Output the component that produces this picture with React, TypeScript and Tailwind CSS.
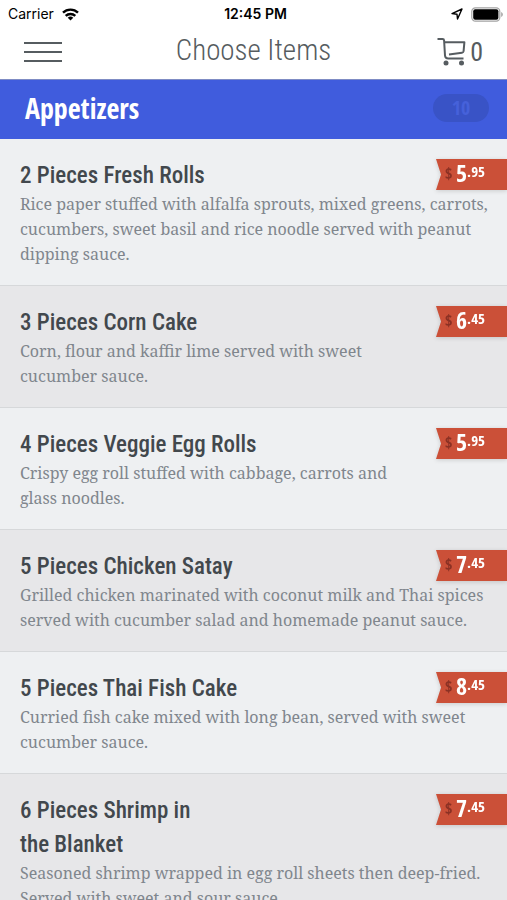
import { useState } from 'react';

type MenuItem = {
    id: number;
    name: string;
    description: string;
    dollars: number;
    cents: string;
};

const MENU_ITEMS: MenuItem[] = [
    {
        id: 1,
        name: '2 Pieces Fresh Rolls',
        description: 'Rice paper stuffed with alfalfa sprouts, mixed greens, carrots,\ncucumbers, sweet basil and rice noodle served with peanut\ndipping sauce.',
        dollars: 5,
        cents: '95',
    },
    {
        id: 2,
        name: '3 Pieces Corn Cake',
        description: 'Corn, flour and kaffir lime served with sweet\ncucumber sauce.',
        dollars: 6,
        cents: '45',
    },
    {
        id: 3,
        name: '4 Pieces Veggie Egg Rolls',
        description: 'Crispy egg roll stuffed with cabbage, carrots and\nglass noodles.',
        dollars: 5,
        cents: '95',
    },
    {
        id: 4,
        name: '5 Pieces Chicken Satay',
        description: 'Grilled chicken marinated with coconut milk and Thai spices\nserved with cucumber salad and homemade peanut sauce.',
        dollars: 7,
        cents: '45',
    },
    {
        id: 5,
        name: '5 Pieces Thai Fish Cake',
        description: 'Curried fish cake mixed with long bean, served with sweet\ncucumber sauce.',
        dollars: 8,
        cents: '45',
    },
    {
        id: 6,
        name: '6 Pieces Shrimp in\nthe Blanket',
        description: 'Seasoned shrimp wrapped in egg roll sheets then deep-fried.\nServed with sweet and sour sauce.',
        dollars: 7,
        cents: '45',
    },
];

const StatusBar = () => (
    <div className="grid grid-cols-3 items-center h-7 pl-2 pr-1 font-['Inter',sans-serif] text-sm text-black">
        <div className="flex items-center gap-2">
            <span>Carrier</span>
            <svg width="17" height="13" viewBox="0 0 17 13" aria-hidden="true">
                <g fill="none" stroke="currentColor" strokeWidth="2.4">
                    <path d="M1 4.7a10.7 10.7 0 0 1 15 0" />
                    <path d="M3.7 7.9a6.9 6.9 0 0 1 9.6 0" />
                </g>
                <path d="M8.5 12.6 5.7 9.8a4 4 0 0 1 5.6 0z" fill="currentColor" />
            </svg>
        </div>
        <span className="text-center font-semibold">12:45 PM</span>
        <div className="flex items-center justify-end gap-2">
            <svg width="12" height="12" viewBox="0 0 12 12" aria-hidden="true">
                <path d="M11 1 6.5 11 6 6.2 1 5.6z" fill="none" stroke="currentColor" strokeWidth="1.4" strokeLinejoin="round" />
            </svg>
            <svg width="32" height="15" viewBox="0 0 32 15" aria-hidden="true">
                <rect x="0.8" y="0.8" width="28" height="13.4" rx="3.6" fill="none" stroke="#a3a3a3" strokeWidth="1.2" />
                <rect x="2.2" y="2.2" width="25.2" height="10.6" rx="2" fill="currentColor" />
                <path d="M30.2 5v5c1-.4 1.6-1.4 1.6-2.5s-.6-2.1-1.6-2.5z" fill="#a3a3a3" />
            </svg>
        </div>
    </div>
);

const CartIcon = () => (
    <svg width="29" height="29" viewBox="0 0 29 29" aria-hidden="true">
        <g fill="none" stroke="currentColor" strokeWidth="2" strokeLinejoin="round">
            <path d="M0.5 2H5.5Q7 2 7.1 3.5L8 18.5Q8.2 21.5 11.2 21.5H26.5" />
            <path d="M7.2 5.2H27.4L26.6 14.2Q26.4 15.5 25 15.7L12 17.4" />
        </g>
        <circle cx="9" cy="26" r="2.5" fill="currentColor" />
        <circle cx="24.5" cy="26" r="2.5" fill="currentColor" />
    </svg>
);

const PriceTag = ({ dollars, cents }: { dollars: number; cents: string }) => (
    <div className="shrink-0 w-[71px] h-[31px] drop-shadow-sm">
        <div className="flex items-start h-full pl-[9px] bg-[#cb5038] [clip-path:polygon(0_0,100%_0,100%_100%,0_100%,5px_50%)] font-['Open_Sans_Condensed',sans-serif] font-bold text-white">
            <span className="w-[11px] text-base leading-7 text-[#8b3124]">$</span>
            <span className="text-2xl leading-7">{dollars}</span>
            <span className="text-[15px] leading-6">.{cents}</span>
        </div>
    </div>
);

const MenuRow = ({ item }: { item: MenuItem }) => (
    <li className="pt-5 pb-[18px] pl-5 border-b border-[#d6d8da] odd:bg-[#eef0f2] even:bg-[#e7e7e9]">
        <div className="flex items-start justify-between -mb-px">
            <h3 className="whitespace-pre-line font-['Roboto_Condensed',sans-serif] font-medium text-[23px] leading-[34px] text-[#42484d]">
                {item.name}
            </h3>
            <PriceTag dollars={item.dollars} cents={item.cents} />
        </div>
        <p className="whitespace-pre-line font-['Noto_Serif',serif] text-base leading-[25px] text-[#80868d]">
            {item.description}
        </p>
    </li>
);

const App = () => {
    const [expanded, setExpanded] = useState(true);

    return (
        <div className="h-screen overflow-hidden bg-white">
            <StatusBar />

            <header className="grid grid-cols-[1fr_auto_1fr] items-center h-[51px] px-6 font-['Roboto_Condensed',sans-serif] text-[#565c60]">
                <button type="button" aria-label="Menu" className="flex flex-col gap-[7px] w-[38px] pb-1">
                    <span className="h-0.5 w-full bg-[#565c60]" />
                    <span className="h-0.5 w-full bg-[#565c60]" />
                    <span className="h-0.5 w-full bg-[#565c60]" />
                </button>
                <h1 className="pb-2 font-light text-[29px] leading-10">Choose Items</h1>
                <button type="button" aria-label="Cart" className="flex items-center justify-self-end gap-1 pb-1 text-[26px] leading-8">
                    <CartIcon />
                    <span>0</span>
                </button>
            </header>

            <main>
                <h2>
                    <button
                        type="button"
                        aria-expanded={expanded}
                        onClick={() => setExpanded(!expanded)}
                        className="flex items-center justify-between w-full h-[60px] pb-1 pl-[25px] pr-[18px] border-t border-[#7f8cc4] bg-[#405cdd] font-['Open_Sans_Condensed',sans-serif] font-bold"
                    >
                        <span className="text-[28px] text-white">Appetizers</span>
                        <span className="w-14 rounded-full bg-[#3953c6] text-center text-xl leading-7 text-[#4661da]">
                            10
                        </span>
                    </button>
                </h2>
                {expanded && (
                    <ul>
                        {MENU_ITEMS.map((item) => (
                            <MenuRow key={item.id} item={item} />
                        ))}
                    </ul>
                )}
            </main>
        </div>
    );
};

export default App;
